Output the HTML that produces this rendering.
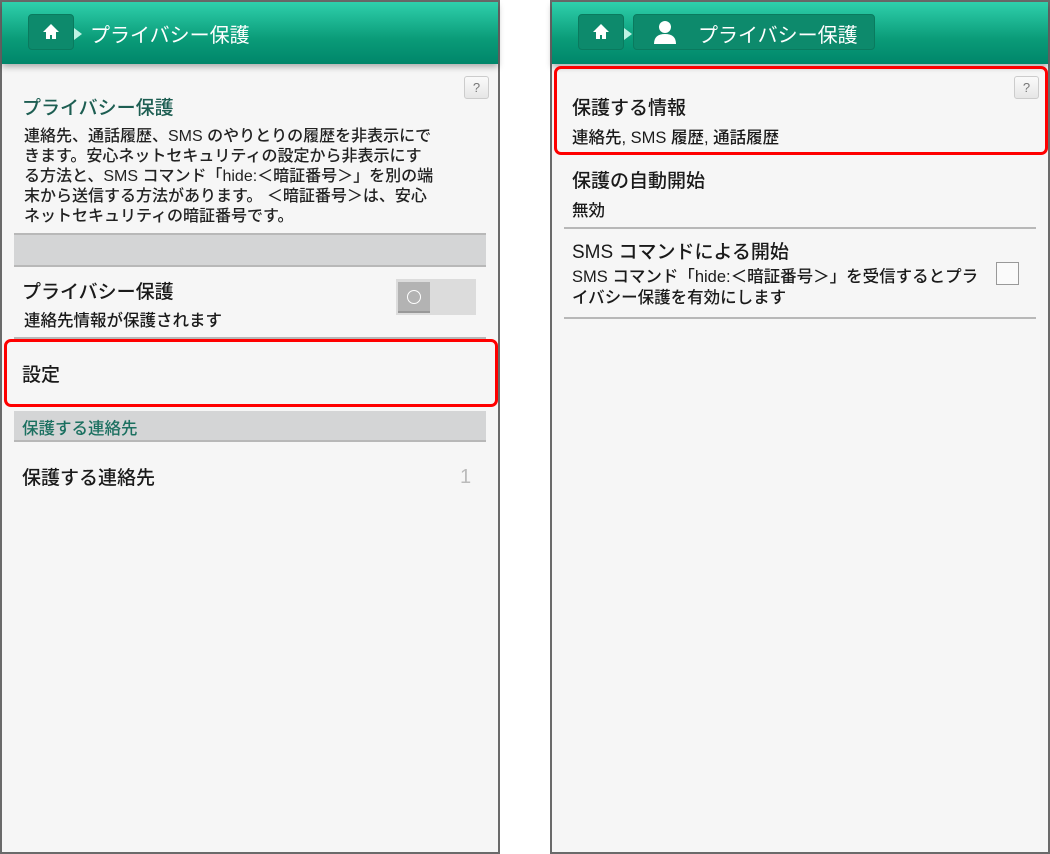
<!DOCTYPE html>
<html><head><meta charset="utf-8"><style>
*{margin:0;padding:0;box-sizing:border-box}
body{width:1050px;height:854px;background:#fff;position:relative;overflow:hidden;font-family:"Liberation Sans","Noto Sans CJK JP",sans-serif;color:#1a1a1a}
.ph{position:absolute;top:0;width:500px;height:854px;background:#f6f6f6;border:2px solid #6a6a6a}
.hd{position:absolute;left:0;top:0;width:496px;height:62px;background:linear-gradient(#2fd0ac,#0a9b78 60%,#00866a);box-shadow:0 3px 6px rgba(0,0,0,.3)}
.home{position:absolute;left:26px;top:12px;width:46px;height:36px;border-radius:4px;background:#0d8a6c;border:1px solid #0a7a5e}
.tri{position:absolute;top:26px;width:0;height:0;border-left:8px solid #bff3e4;border-top:6px solid transparent;border-bottom:6px solid transparent}
.ht{position:absolute;top:17px;color:#fff;font-size:20px;white-space:nowrap}
.a{position:absolute;white-space:nowrap}
.t{font-size:19px;font-weight:500}
.s{font-size:16.5px;font-weight:500}
.ln{position:absolute;height:2px;background:#b8b8b8}
.band{position:absolute;background:#d4d5d6}
.q{position:absolute;width:25px;height:23px;border:1px solid #ccc;border-radius:3px;background:linear-gradient(#fafafa,#e6e6e6);color:#777;font-size:13px;text-align:center;line-height:21px}
.red{position:absolute;border:3px solid #f00;border-radius:7px}
</style></head><body>
<div class="ph" style="left:0">
 <div class="hd">
  <div class="home"><svg width="44" height="34" viewBox="0 0 44 34"><path d="M22 9 L14 17 H17 V24 H21 V20 H23 V24 H27 V17 H30 Z" fill="#fff"/></svg></div>
  <div class="tri" style="left:72px"></div>
  <div class="ht" style="left:88px">プライバシー保護</div>
 </div>
 <div class="q" style="left:462px;top:74px">?</div>
 <div class="a" style="left:20px;top:91px;font-size:19px;font-weight:500;color:#1d5e52">プライバシー保護</div>
 <div class="a" style="left:22px;top:125px;font-size:16px;line-height:20px;color:#222;font-weight:500">連絡先、通話履歴、SMS のやりとりの履歴を非表示にで<br>きます。安心ネットセキュリティの設定から非表示にす<br>る方法と、SMS コマンド「hide:＜暗証番号＞」を別の端<br>末から送信する方法があります。 ＜暗証番号＞は、安心<br>ネットセキュリティの暗証番号です。</div>
 <div class="ln" style="left:12px;top:231px;width:472px"></div>
 <div class="band" style="left:12px;top:233px;width:472px;height:31px"></div>
 <div class="ln" style="left:12px;top:263px;width:472px"></div>
 <div class="a t" style="left:20px;top:275px">プライバシー保護</div>
 <div class="a s" style="left:22px;top:305px">連絡先情報が保護されます</div>
 <div style="position:absolute;left:394px;top:277px;width:80px;height:36px;background:#dcdcdc"></div>
 <div style="position:absolute;left:396px;top:280px;width:32px;height:31px;background:#b3b3b3;border-bottom:2px solid #999"><div style="position:absolute;left:9px;top:8px;width:14px;height:14px;border:1.5px solid #fff;border-radius:50%"></div></div>
 <div class="ln" style="left:12px;top:335px;width:472px"></div>
 <div class="red" style="left:2px;top:337px;width:494px;height:68px"></div>
 <div class="a t" style="left:20px;top:358px">設定</div>
 <div class="band" style="left:12px;top:409px;width:472px;height:30px"></div>
 <div class="ln" style="left:12px;top:438px;width:472px"></div>
 <div class="a" style="left:20px;top:413px;font-size:16.5px;font-weight:500;color:#1b7060">保護する連絡先</div>
 <div class="a t" style="left:20px;top:461px">保護する連絡先</div>
 <div class="a" style="left:458px;top:464px;font-size:20px;color:#bbb">1</div>
</div>

<div class="ph" style="left:550px">
 <div class="hd">
  <div class="home"><svg width="44" height="34" viewBox="0 0 44 34"><path d="M22 9 L14 17 H17 V24 H21 V20 H23 V24 H27 V17 H30 Z" fill="#fff"/></svg></div>
  <div class="tri" style="left:72px"></div>
  <div style="position:absolute;left:81px;top:12px;width:242px;height:36px;border-radius:4px;background:#0d8a6c;border:1px solid #0a7a5e"></div>
  <svg style="position:absolute;left:101px;top:17px" width="24" height="26" viewBox="0 0 24 26"><circle cx="12" cy="8" r="6" fill="#fff"/><path d="M1 25 Q1 15 12 15 Q23 15 23 25 Z" fill="#fff"/></svg>
  <div class="ht" style="left:146px">プライバシー保護</div>
 </div>
 <div class="q" style="left:462px;top:74px">?</div>
 <div class="a t" style="left:20px;top:91px">保護する情報</div>
 <div class="a s" style="left:20px;top:122px">連絡先, SMS 履歴, 通話履歴</div>
 <div class="ln" style="left:12px;top:151px;width:472px"></div>
 <div class="red" style="left:2px;top:64px;width:494px;height:89px"></div>
 <div class="a t" style="left:20px;top:164px">保護の自動開始</div>
 <div class="a s" style="left:20px;top:195px">無効</div>
 <div class="ln" style="left:12px;top:225px;width:472px"></div>
 <div class="a t" style="left:20px;top:235px">SMS コマンドによる開始</div>
 <div class="a s" style="left:20px;top:265px;line-height:21px">SMS コマンド「hide:＜暗証番号＞」を受信するとプラ<br>イバシー保護を有効にします</div>
 <div style="position:absolute;left:444px;top:260px;width:23px;height:23px;border:1.5px solid #999;background:#fafafa"></div>
 <div class="ln" style="left:12px;top:315px;width:472px"></div>
</div>
</body></html>
